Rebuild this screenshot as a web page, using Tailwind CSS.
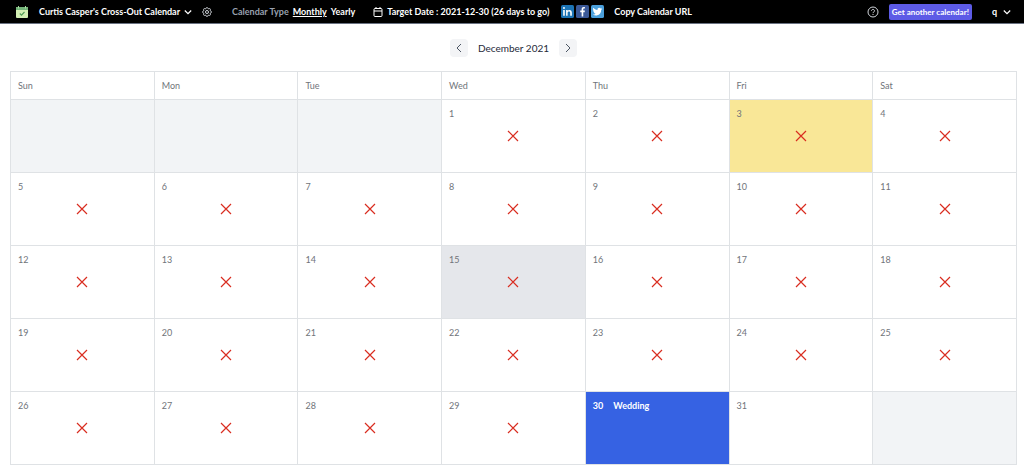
<!DOCTYPE html>
<html lang="en">
<head>
    <meta charset="UTF-8">
    <meta name="viewport" content="width=device-width, initial-scale=1.0">
    <title>Curtis Casper's Cross-Out Calendar</title>
    <script src="https://cdn.jsdelivr.net/npm/@tailwindcss/browser@4"></script>
</head>
<body class="bg-white font-['Lato',sans-serif] text-[9px] leading-4">
    <!-- Top bar -->
    <header class="flex h-6 items-center border-b border-gray-500 bg-black pr-[13px] pl-4 font-bold whitespace-nowrap text-white">
        <svg class="mr-[11px] size-3 shrink-0" viewBox="0 0 12 12" aria-hidden="true">
            <rect width="12" height="11" y="1" rx="1" fill="#d3efb4"/>
            <path d="M0 4V2a1 1 0 0 1 1-1h10a1 1 0 0 1 1 1v2z" fill="#72b378"/>
            <path d="M2.500 0v2.500M9.500 0v2.500" stroke="#a9d8a0" stroke-width="1"/>
            <path d="M3.800 7.500l1.700 1.700 3-3.200" fill="none" stroke="#4f9a56" stroke-width="1.100"/>
        </svg>
        <h1>Curtis Casper's Cross-Out Calendar</h1>
        <button class="ml-1" aria-label="Switch calendar">
            <svg class="size-2" viewBox="0 0 8 8" fill="none" stroke="currentColor" stroke-width="1.200"><path d="M.8 2.500L4 5.700l3.200-3.200"/></svg>
        </button>
        <button class="ml-[10px]" aria-label="Settings">
            <svg class="size-[10px]" viewBox="2 2 20 20" fill="none" stroke="#d1d5db" stroke-width="2">
                <path d="M10.300 4.300c.4-1.700 2.900-1.700 3.400 0a1.700 1.700 0 0 0 2.500 1.100c1.600-.9 3.300.8 2.400 2.400a1.700 1.700 0 0 0 1.100 2.500c1.700.5 1.700 2.900 0 3.400a1.700 1.700 0 0 0-1.100 2.500c.9 1.600-.8 3.300-2.400 2.400a1.700 1.700 0 0 0-2.500 1.100c-.5 1.700-3 1.700-3.400 0a1.700 1.700 0 0 0-2.500-1.100c-1.600.9-3.300-.8-2.400-2.400a1.700 1.700 0 0 0-1.100-2.500c-1.700-.5-1.700-2.900 0-3.400a1.700 1.700 0 0 0 1.100-2.500c-.9-1.600.8-3.300 2.400-2.400a1.700 1.700 0 0 0 2.500-1.100z"/>
                <circle cx="12" cy="12" r="3"/>
            </svg>
        </button>
        <nav class="ml-5 flex gap-1">
            <span class="text-gray-400">Calendar Type</span>
            <a href="#" class="underline">Monthly</a>
            <a href="#">Yearly</a>
        </nav>
        <svg class="ml-[18px] size-[10px] shrink-0" viewBox="0 0 10 10" fill="none" stroke="currentColor" aria-hidden="true">
            <rect x="1" y="1.500" width="8" height="8" rx="1"/>
            <path d="M1 4h8M3 0v2M7 0v2"/>
        </svg>
        <p class="ml-1">Target Date : 2021-12-30 (26 days to go)</p>
        <div class="ml-3 flex gap-[2px]">
            <a href="#" aria-label="LinkedIn">
                <svg class="size-[13px]" viewBox="0 0 12 12"><rect width="12" height="12" rx="1.500" fill="#1c74b5"/><path d="M2 4.600h1.500V10H2zM4.700 4.600h1.400v.8c.8-1.400 3.900-1.300 3.900 1.500V10H8.500V7.200c0-1.700-2.400-1.500-2.400 0V10H4.700z" fill="#fff"/><circle cx="2.750" cy="2.800" r=".9" fill="#fff"/></svg>
            </a>
            <a href="#" aria-label="Facebook">
                <svg class="size-[13px]" viewBox="0 0 12 12"><rect width="12" height="12" rx="1.500" fill="#3b5998"/><path d="M5.200 10.500V6.700H3.900V5.100h1.300V4c0-1.500.8-2.200 2-2.200h1v1.500h-.7c-.6 0-.8.300-.8.800v1h1.500l-.2 1.600H6.700v3.800z" fill="#fff"/></svg>
            </a>
            <a href="#" aria-label="Twitter">
                <svg class="size-[13px]" viewBox="0 0 12 12"><rect width="12" height="12" rx="1.500" fill="#4b9fdb"/><path d="M10.400 3.500l-1 .3.700-1-1.200.4C7.700 2 5.700 2.900 6 4.600 4.300 4.500 3 3.700 2.100 2.600c-.5.900-.3 1.900.6 2.500L1.900 4.900c0 .9.600 1.600 1.500 1.800l-.8.100c.2.700.8 1.200 1.700 1.200-.8.600-1.700.8-2.700.8 3.700 2.100 7.900-.2 7.800-4.300z" fill="#fff"/></svg>
            </a>
        </div>
        <button class="ml-[10px]">Copy Calendar URL</button>
        <div class="ml-auto flex items-center">
            <button aria-label="Help">
                <svg class="size-3" viewBox="0 0 12 12" fill="none" stroke="#d1d5db"><circle cx="6" cy="6" r="5"/><path d="M4.500 4.900c0-2 3-2 3 0C7.500 6 6 5.900 6 7.100M6 8v1"/></svg>
            </button>
            <button class="ml-[10px] rounded-xs bg-[#5d5be6] px-[3px] text-[8px]">Get another calendar!</button>
            <button class="ml-5 flex items-center gap-[6px]">
                q
                <svg class="size-2" viewBox="0 0 8 8" fill="none" stroke="currentColor" stroke-width="1.200" aria-hidden="true"><path d="M.8 2.500L4 5.700l3.200-3.200"/></svg>
            </button>
        </div>
    </header>

    <main class="pr-[7px] pl-[10px]">
        <!-- Month switcher -->
        <div class="flex h-[47px] items-center justify-center gap-[10px] text-gray-800">
            <button class="flex size-[18px] items-center justify-center rounded bg-gray-100" aria-label="Previous month">
                <svg class="size-[10px]" viewBox="0 0 10 10" fill="none" stroke="#4b5563"><path d="M7 1L3 5l4 4"/></svg>
            </button>
            <h2 class="text-[10px]">December 2021</h2>
            <button class="flex size-[18px] items-center justify-center rounded bg-gray-100" aria-label="Next month">
                <svg class="size-[10px]" viewBox="0 0 10 10" fill="none" stroke="#4b5563"><path d="M3 1l4 4-4 4"/></svg>
            </button>
        </div>

        <table class="h-[394px] w-full table-fixed border-collapse text-[#70747a]">
            <thead>
                <tr id="weekdays" class="h-7"></tr>
            </thead>
            <tbody id="weeks"></tbody>
        </table>
    </main>

    <script>
        const weekdays = ['Sun', 'Mon', 'Tue', 'Wed', 'Thu', 'Fri', 'Sat'];
        const firstWeekday = 3;
        const daysInMonth = 31;
        const lastCrossed = 29;
        const events = { 30: 'Wedding' };
        const dayStyles = {
            3: 'bg-[#f9e797]',
            15: 'bg-gray-200',
            30: 'bg-[#3662e3] font-bold text-white',
        };
        const cross = '<svg class="mx-auto mt-[6px] size-4" viewBox="0 0 16 16" stroke="#d92d20" stroke-width="1.200" role="img" aria-label="Crossed out"><path d="M3 3l10 10M13 3L3 13"/></svg>';

        function dayCell(day) {
            if (day < 1 || day > daysInMonth) {
                return '<td class="border border-[#dfe2e5] bg-[#f2f4f6]"></td>';
            }
            const event = events[day] ? `<span class="ml-[10px]">${events[day]}</span>` : '';
            return `<td class="border border-[#dfe2e5] px-[7px] pt-[6px] align-top ${dayStyles[day] || ''}">
                <div><span>${day}</span>${event}</div>
                ${day <= lastCrossed ? cross : ''}
            </td>`;
        }

        document.getElementById('weekdays').innerHTML = weekdays
            .map(name => `<th class="border border-[#dfe2e5] px-[7px] text-left font-normal">${name}</th>`)
            .join('');

        let rows = '';
        for (let start = 1 - firstWeekday; start <= daysInMonth; start += 7) {
            rows += '<tr>';
            for (let i = 0; i < 7; i++) rows += dayCell(start + i);
            rows += '</tr>';
        }
        document.getElementById('weeks').innerHTML = rows;
    </script>
</body>
</html>
